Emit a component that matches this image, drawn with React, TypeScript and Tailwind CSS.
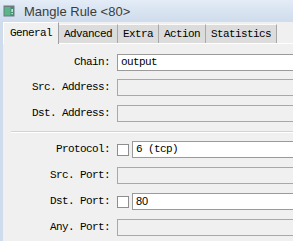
import type { ReactNode } from 'react'

const mono = { fontFamily: '"Liberation Mono", "DejaVu Sans Mono", monospace' }

type Row = {
  label: string
  value?: string
  check?: boolean
  sans?: boolean
  enabled?: boolean
}

const topRows: Row[] = [
  { label: 'Chain:', value: 'output', enabled: true },
  { label: 'Src. Address:' },
  { label: 'Dst. Address:' },
]

const portRows: Row[] = [
  { label: 'Protocol:', value: '6 (tcp)', check: true, enabled: true },
  { label: 'Src. Port:' },
  { label: 'Dst. Port:', value: '80', check: true, enabled: true, sans: true },
  { label: 'Any. Port:' },
]

const tabs = ['General', 'Advanced', 'Extra', 'Action', 'Statistics']

function WinIcon() {
  return (
    <svg width="12" height="12" viewBox="0 0 12 12">
      <rect x="0.5" y="0.5" width="11" height="11" fill="#6e7b86" />
      <rect x="1.5" y="2" width="9" height="8.5" fill="#3f8f6b" />
      <rect x="1.5" y="2" width="6" height="8.5" fill="#5fb38a" />
      <rect x="8.5" y="4" width="1.2" height="3" fill="#fff" />
      <rect x="8.5" y="8" width="1.2" height="1.2" fill="#fff" />
    </svg>
  )
}

function Field({ row }: { row: Row }) {
  const box = row.enabled
    ? 'bg-white border-[#9a9a9a]'
    : 'bg-[#f0f0f0] border-[#a8a8a8]'
  return (
    <div className="flex items-center h-[17px]">
      <div
        className="w-[107px] shrink-0 text-right text-[11px] tracking-[-0.6px] text-black leading-none"
        style={mono}
      >
        {row.label}
      </div>
      <div className="ml-[7px] flex items-center flex-1 min-w-[220px]">
        {row.check && (
          <div className="w-[12px] h-[12px] shrink-0 bg-white border border-[#8e8e8e] mr-[3px]" />
        )}
        <div
          className={`h-[17px] flex-1 border flex items-center pl-[3px] text-[11px] leading-none text-black ${box}`}
          style={
            row.sans
              ? { fontFamily: '"Liberation Sans", Arial, sans-serif' }
              : { ...mono, letterSpacing: '-0.6px' }
          }
        >
          {row.value}
        </div>
      </div>
    </div>
  )
}

function Group({ children, className = '' }: { children: ReactNode; className?: string }) {
  return <div className={`flex flex-col gap-[9px] ${className}`}>{children}</div>
}

export default function App() {
  return (
    <div className="w-[293px] h-[241px] overflow-hidden bg-[#f0f0f0] flex flex-col">
      {/* title bar */}
      <div className="h-[22px] shrink-0 flex items-center pl-[3px] bg-gradient-to-b from-[#e3ecf7] to-[#cfdcec]">
        <WinIcon />
        <span
          className="ml-[9px] text-[13px] text-[#3c3c3c] leading-none"
          style={{ fontFamily: '"Liberation Sans", Arial, sans-serif' }}
        >
          Mangle Rule &lt;80&gt;
        </span>
      </div>

      <div className="flex-1 flex border-l-[3px] border-[#cfdcec]">
        <div className="flex-1 flex flex-col min-w-0">
          {/* tabs */}
          <div className="h-[22px] flex items-end shrink-0 border-b border-white relative">
            {tabs.map((t, i) =>
              i === 0 ? (
                <div
                  key={t}
                  className="h-[22px] px-[6px] flex items-center bg-[#f0f0f0] border-t border-l border-r border-white border-r-[#a0a0a0] -mb-px text-[11px] tracking-[-0.6px] text-black leading-none"
                  style={mono}
                >
                  {t}
                </div>
              ) : (
                <div
                  key={t}
                  className="h-[19px] px-[5px] flex items-center bg-[#dcdcdc] border-t border-r border-[#fafafa] border-r-[#a8a8a8] text-[11px] tracking-[-0.6px] text-black leading-none"
                  style={mono}
                >
                  {t}
                </div>
              ),
            )}
          </div>

          {/* panel */}
          <div className="flex-1 flex flex-col pt-[10px]">
            <div className="flex flex-col">
              <Field row={topRows[0]} />
              <div className="mt-[8px]">
                <Field row={topRows[1]} />
              </div>
              <div className="mt-[9px]">
                <Field row={topRows[2]} />
              </div>
            </div>
            <div className="ml-[8px] mt-[9px] mb-[8px] border-t border-[#d4d4d4] border-b border-b-white" />
            <Group>
              {portRows.map((r) => (
                <Field key={r.label} row={r} />
              ))}
            </Group>
          </div>
        </div>
      </div>
    </div>
  )
}
